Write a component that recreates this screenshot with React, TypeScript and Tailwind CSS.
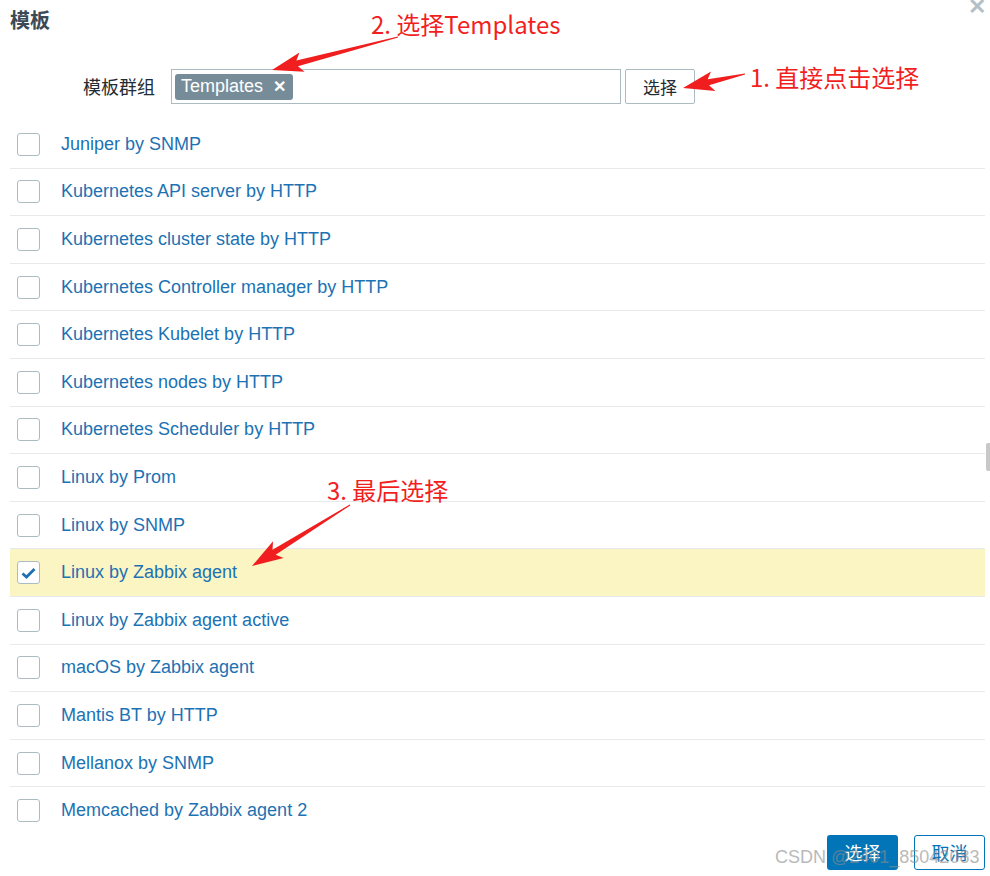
import React from "react";

const items = [
  "Juniper by SNMP",
  "Kubernetes API server by HTTP",
  "Kubernetes cluster state by HTTP",
  "Kubernetes Controller manager by HTTP",
  "Kubernetes Kubelet by HTTP",
  "Kubernetes nodes by HTTP",
  "Kubernetes Scheduler by HTTP",
  "Linux by Prom",
  "Linux by SNMP",
  "Linux by Zabbix agent",
  "Linux by Zabbix agent active",
  "macOS by Zabbix agent",
  "Mantis BT by HTTP",
  "Mellanox by SNMP",
  "Memcached by Zabbix agent 2",
];

function Arrow({ x1, y1, x2, y2 }: { x1: number; y1: number; x2: number; y2: number }) {
  const dx = x2 - x1;
  const dy = y2 - y1;
  const len = Math.hypot(dx, dy);
  const ux = dx / len;
  const uy = dy / len;
  const nx = -uy;
  const ny = ux;
  const headLen = 26;
  const headW = 10;
  const shaftW = 3;
  const bx = x2 - ux * headLen;
  const by = y2 - uy * headLen;
  const pts = [
    [x1 + nx * 0.5, y1 + ny * 0.5],
    [bx + nx * shaftW, by + ny * shaftW],
    [bx + nx * headW - ux * 5, by + ny * headW - uy * 5],
    [x2, y2],
    [bx - nx * headW - ux * 5, by - ny * headW - uy * 5],
    [bx - nx * shaftW, by - ny * shaftW],
    [x1 - nx * 0.5, y1 - ny * 0.5],
  ];
  return <polygon points={pts.map((p) => p.join(",")).join(" ")} fill="#f01e1e" />;
}

export default function App() {
  return (
    <div
      className="relative w-[990px] h-[876px] overflow-hidden bg-white"
      style={{ fontFamily: '"Liberation Sans", Arial, "Noto Sans CJK SC", sans-serif' }}
    >
      {/* Header */}
      <div className="flex h-[48px] items-start px-[10px] pt-[6px]">
        <div className="text-[20px] font-bold leading-[28px] text-[#3b4a55]" style={{ fontFamily: '"Noto Sans CJK SC", sans-serif' }}>
          模板
        </div>
      </div>
      <div className="absolute right-[4px] top-[-4px] text-[22px] font-bold leading-none text-[#b5c0c6]">✕</div>

      {/* Form row */}
      <div className="mt-[21px] flex h-[35px] items-center">
        <div
          className="w-[156px] pr-[1px] text-right text-[18px] text-[#1f2c33]"
          style={{ fontFamily: '"Noto Sans CJK SC", sans-serif' }}
        >
          模板群组
        </div>
        <div className="ml-[15px] flex h-[35px] w-[450px] items-center border border-[#acbbc2] bg-white px-[3px]">
          <div className="flex h-[26px] items-center gap-[10px] rounded-[3px] bg-[#768d99] pl-[6px] pr-[7px] text-[18px] text-white">
            <span>Templates</span>
            <span className="text-[16px] font-bold">✕</span>
          </div>
        </div>
        <div
          className="ml-[4px] flex h-[35px] w-[70px] items-center justify-center rounded-[2px] border border-[#acbbc2] bg-white text-[17px] text-[#1f2c33]"
          style={{ fontFamily: '"Noto Sans CJK SC", sans-serif' }}
        >
          选择
        </div>
      </div>

      {/* List */}
      <div className="ml-[10px] mt-[17px] h-[710px] w-[975px] overflow-hidden">
        {items.map((t, i) => {
          const checked = i === 9;
          return (
            <div
              key={t}
              className={`flex h-[47.6px] items-center border-b border-[#e6eaec] ${checked ? "bg-[#fbf5c4]" : ""}`}
            >
              <div className="ml-[7px] flex h-[23px] w-[23px] items-center justify-center rounded-[3px] border border-[#acbbc2] bg-white">
                {checked && (
                  <svg width="15" height="12" viewBox="0 0 15 12">
                    <path d="M1.5 6.5 L5.5 10 L13.5 2" stroke="#1f6fb5" strokeWidth="2.8" fill="none" />
                  </svg>
                )}
              </div>
              <div className="ml-[21px] text-[18px] text-[#1c72b3]">{t}</div>
            </div>
          );
        })}
      </div>

      {/* Footer */}
      <div className="absolute bottom-[6px] right-[5px] flex gap-[16px]" style={{ fontFamily: '"Noto Sans CJK SC", sans-serif' }}>
        <div className="flex h-[35px] w-[71px] items-center justify-center rounded-[3px] bg-[#0275b8] text-[18px] text-white">
          选择
        </div>
        <div className="flex h-[35px] w-[71px] items-center justify-center rounded-[3px] border border-[#0275b8] bg-white text-[18px] text-[#0275b8]">
          取消
        </div>
      </div>

      {/* Watermark */}
      <div className="pointer-events-none absolute left-[775px] top-[845px] whitespace-nowrap text-[18px] leading-[24px] text-[#8c8c8c] opacity-60">
        CSDN @2401_85042083
      </div>

      {/* Scrollbar hint */}
      <div className="absolute left-[986px] top-[443px] h-[28px] w-[4px] rounded-l-[2px] bg-[#c8c8c8]" />

      {/* Annotations */}
      <svg className="pointer-events-none absolute left-0 top-0" width="990" height="876">
        <Arrow x1={398} y1={37} x2={272} y2={70} />
        <Arrow x1={745} y1={74} x2={683} y2={88} />
        <Arrow x1={350} y1={505} x2={252} y2={566} />
      </svg>
      <div
        className="pointer-events-none absolute left-[371px] top-[8px] text-[24px] leading-[32px] text-[#f21f1f]"
        style={{ fontFamily: '"Noto Sans CJK SC", sans-serif' }}
      >
        2. 选择Templates
      </div>
      <div
        className="pointer-events-none absolute left-[750px] top-[61px] text-[24px] leading-[32px] text-[#f21f1f]"
        style={{ fontFamily: '"Noto Sans CJK SC", sans-serif' }}
      >
        1. 直接点击选择
      </div>
      <div
        className="pointer-events-none absolute left-[327px] top-[474px] text-[24px] leading-[32px] text-[#f21f1f]"
        style={{ fontFamily: '"Noto Sans CJK SC", sans-serif' }}
      >
        3. 最后选择
      </div>
    </div>
  );
}
